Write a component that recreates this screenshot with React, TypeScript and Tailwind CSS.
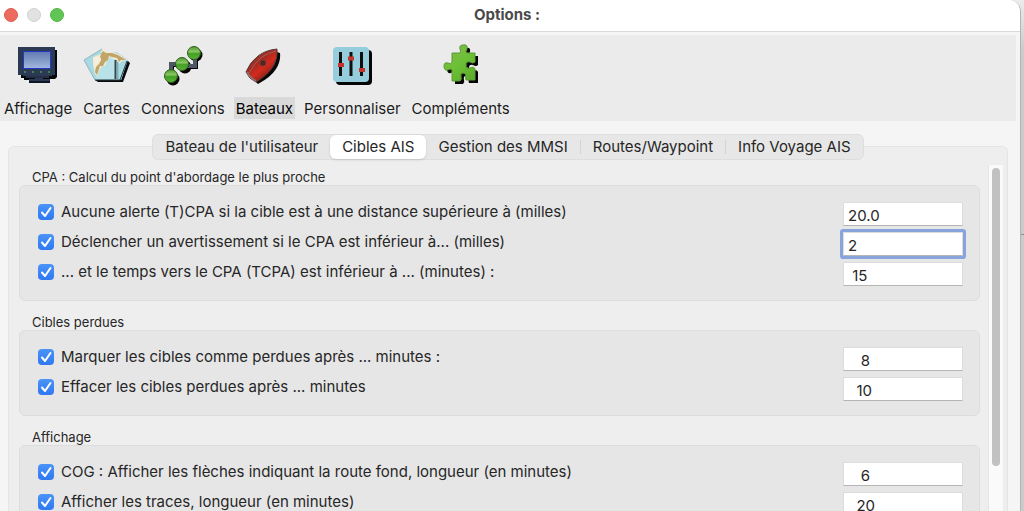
import React, { useState } from 'react';

const DisplayIcon = () => (
    <svg width="48" height="44" viewBox="0 0 48 44" aria-hidden="true">
        <path d="M7 6H43V33L41 35H36V39H15V36H10V34H7Z" fill="#05070b" />
        <path d="M4 3H41V31H38V32H35V34H29V35H36V37H15V35H21V34H12V32H9V31H4Z" fill="#2b3a52" />
        <path d="M15 37H36V39H15Z" fill="#101826" />
        <path d="M12 33H35" stroke="#1a2537" />
        <rect x="9.5" y="7.5" width="27" height="17" fill="url(#screen)" stroke="#2338c4" />
        <path d="M10 28h2M18 28h2M26 28h2M34 28h2" stroke="#3fa04c" strokeWidth="1.500" />
        <defs>
            <linearGradient id="screen" x1="0" y1="0" x2="0" y2="1">
                <stop offset="0" stopColor="#6079b0" />
                <stop offset="1" stopColor="#a3b8df" />
            </linearGradient>
        </defs>
    </svg>
);

const ChartIcon = () => (
    <svg width="48" height="44" viewBox="0 0 48 44" aria-hidden="true">
        <path d="M15 38H40L47 19L44 16L38 36L12 36Z" fill="#080b0d" />
        <path d="M1 16L19 5L25 9L34 8L45 16L38 36H12Z" fill="#a9d9e2" />
        <path d="M1 16L19 5M1 16L12 36" fill="none" stroke="#8fb6be" />
        <path d="M11 13L32 12V35H13Z" fill="#b9e2e8" />
        <path d="M10 13L18 10L19 5L21 4L24 8L29 8L36 10L41 14L45 16L39 17L36 20L34 16L30 15L27 13L24 17L22 22L19 22L16 27L14 32L12 30L10 21Z" fill="#f1ead4" />
        <path d="M18 10L20 7L23 9L29 9L35 11L40 14L43 16L38 16L36 18L34 14L29 13L26 12L25 16L22 18L20 22L17 22L14 31L12 28L13 23L16 20L18 16L17 13Z" fill="#c2a668" />
        <path d="M11 14L17 13L18 16L14 20L12 24Z" fill="#f5efdd" />
        <path d="M32.500 16V35" stroke="#36474b" strokeWidth="2" />
        <path d="M34.500 18V35" stroke="#7eaeb7" strokeWidth="2" />
        <path d="M44 17L37 36H12" fill="none" stroke="#27373b" />
    </svg>
);

const ConnectionIcon = () => (
    <svg width="48" height="44" viewBox="0 0 48 44" aria-hidden="true">
        <g fill="#050505">
            <circle cx="14" cy="35" r="6.500" />
            <circle cx="26" cy="23" r="6.500" />
            <circle cx="37" cy="11" r="6.500" />
        </g>
        <path d="M14 31V22H24M25 24H38V13" fill="none" stroke="#050505" strokeWidth="2" />
        <path d="M12 31V20H23M24 22H36V10" fill="none" stroke="#4d5664" strokeWidth="4" />
        <g fill="url(#node)" stroke="#2f5e1e">
            <circle cx="12" cy="32" r="6.500" />
            <circle cx="23" cy="20" r="6.500" />
            <circle cx="35" cy="9" r="6.500" />
        </g>
        <defs>
            <linearGradient id="node" x1="0" y1="0" x2="0" y2="1">
                <stop offset="0" stopColor="#4d9a2c" />
                <stop offset="0.4" stopColor="#8ac666" />
                <stop offset="0.55" stopColor="#43a023" />
                <stop offset="1" stopColor="#5cb236" />
            </linearGradient>
        </defs>
    </svg>
);

const BoatIcon = () => (
    <svg width="48" height="44" viewBox="0 0 48 44" aria-hidden="true">
        <path d="M9 32L18 40Q31 33 36 25Q41 17 40 9L37 8Z" fill="#080808" />
        <path d="M6 28Q10 18 18 12Q26 6 37 5Q38 13 34 21Q28 31 16 38Q9 35 6 28Z" fill="url(#hull)" stroke="#5a3a37" />
        <path d="M9 29Q14 19 22 13Q28 9 36 7" fill="none" stroke="#9a625b" />
        <path d="M7 28Q10 34 16 37" fill="none" stroke="#8a716d" strokeWidth="2" />
        <circle cx="23" cy="19" r="3" fill="#4e2624" stroke="#7a3530" />
        <defs>
            <linearGradient id="hull" x1="0.2" y1="0.1" x2="0.75" y2="0.8">
                <stop offset="0" stopColor="#82463f" />
                <stop offset="0.4" stopColor="#a62921" />
                <stop offset="0.65" stopColor="#d32b1d" />
                <stop offset="1" stopColor="#8a2019" />
            </linearGradient>
        </defs>
    </svg>
);

const SlidersIcon = () => (
    <svg width="48" height="44" viewBox="0 0 48 44" aria-hidden="true">
        <rect x="8" y="6" width="36" height="35" rx="4" fill="#050505" />
        <rect x="5" y="3" width="36" height="35" rx="4" fill="#96cddc" />
        <path d="M12.500 8V32M23 8V32M33.500 8V32" stroke="#101010" strokeWidth="3" />
        <path d="M10 21H16M20 14.500H26M31 26H37" stroke="#c3342d" strokeWidth="4" />
    </svg>
);

const PuzzleIcon = () => {
    const piece = 'M15 9H23Q24 8 23 5Q22 1 26 1Q31 0 30 5Q28 8 30 9H38V18Q36 20 33 18Q29 17 29 21Q29 25 33 24Q37 22 38 25V36H29Q28 34 29 32Q29 29 26 29Q23 29 24 33Q25 35 23 37H15V26Q13 24 11 26Q7 27 7 22Q7 18 11 19Q14 21 15 18Z';
    return (
        <svg width="48" height="44" viewBox="0 0 48 44" aria-hidden="true">
            <path d={piece} transform="translate(3 3)" fill="#050505" />
            <path d={piece} fill="url(#piece)" stroke="#5c9a34" />
            <defs>
                <linearGradient id="piece" x1="0" y1="0" x2="0.7" y2="1">
                    <stop offset="0" stopColor="#82b94d" />
                    <stop offset="0.6" stopColor="#6cc036" />
                    <stop offset="1" stopColor="#5faf2c" />
                </linearGradient>
            </defs>
        </svg>
    );
};

const sections = [
    { name: 'Affichage', icon: <DisplayIcon /> },
    { name: 'Cartes', icon: <ChartIcon /> },
    { name: 'Connexions', icon: <ConnectionIcon /> },
    { name: 'Bateaux', icon: <BoatIcon /> },
    { name: 'Personnaliser', icon: <SlidersIcon /> },
    { name: 'Compléments', icon: <PuzzleIcon /> },
];

const tabs = ["Bateau de l'utilisateur", 'Cibles AIS', 'Gestion des MMSI', 'Routes/Waypoint', 'Info Voyage AIS'];

const groups = [
    {
        title: "CPA : Calcul du point d'abordage le plus proche",
        rows: [
            { id: 'cpa-max', label: 'Aucune alerte (T)CPA si la cible est à une distance supérieure à (milles)', value: '20.0' },
            { id: 'cpa-warn', label: 'Déclencher un avertissement si le CPA est inférieur à... (milles)', value: '2' },
            { id: 'tcpa', label: '... et le temps vers le CPA (TCPA) est inférieur à ... (minutes) :', value: ' 15' },
        ],
    },
    {
        title: 'Cibles perdues',
        rows: [
            { id: 'mark-lost', label: 'Marquer les cibles comme perdues après ... minutes :', value: '   8' },
            { id: 'remove-lost', label: 'Effacer les cibles perdues après ... minutes', value: '  10' },
        ],
    },
    {
        title: 'Affichage',
        rows: [
            { id: 'cog', label: 'COG : Afficher les flèches indiquant la route fond, longueur (en minutes)', value: '   6' },
            { id: 'tracks', label: 'Afficher les traces, longueur (en minutes)', value: '  20' },
        ],
    },
];

const OptionRow: React.FC<{ id: string; label: string; value: string }> = ({ id, label, value }) => {
    const focused = id === 'cpa-warn';
    return (
        <div className="flex h-[30px] items-center justify-between">
            <label className="flex items-center gap-[7px] pb-1">
                <span className="grid size-4 shrink-0">
                    <input
                        type="checkbox"
                        defaultChecked
                        className="peer col-start-1 row-start-1 size-4 appearance-none rounded-[4px] bg-white checked:bg-linear-to-b checked:from-[#4a93f8] checked:to-[#2f78f1]"
                    />
                    <svg viewBox="0 0 16 16" className="pointer-events-none invisible col-start-1 row-start-1 size-4 peer-checked:visible" aria-hidden="true">
                        <path d="M4 8.500L7 12L12.500 4" fill="none" stroke="#ffffff" strokeWidth="2" strokeLinecap="round" strokeLinejoin="round" />
                    </svg>
                </span>
                {label}
            </label>
            <input
                type="text"
                id={id}
                aria-label={label}
                defaultValue={value}
                className={`h-6 w-[120px] border border-[#dcdcdc] border-b-[#b5b5b5] bg-white pt-[2px] pl-1 outline-none ${focused ? 'rounded-[1px] ring-3 ring-[#87a4dd]' : ''}`}
            />
        </div>
    );
};

const App: React.FC = () => {
    const [section, setSection] = useState('Bateaux');
    const [tab, setTab] = useState('Cibles AIS');

    return (
        <div className="flex h-screen overflow-hidden bg-linear-to-b from-[#ececec] to-[#cbcbcb] to-10% font-['Inter','Liberation_Sans',sans-serif] text-[15px] leading-5 text-[#262626]">
            <div className="flex min-w-0 flex-1 flex-col overflow-hidden rounded-tr-xl border-r border-[#b4b4b4] bg-[#f5f5f5]">
                {/* Title bar */}
                <header className="grid h-8 shrink-0 grid-cols-[1fr_auto_1fr] items-center border-b border-[#d9d9d9] bg-white pr-[10px] pb-[2px] pl-1">
                    <div className="flex gap-[9px]">
                        <button aria-label="Fermer" className="size-[14px] rounded-full border border-[#de5b51] bg-[#ed6a5f]" />
                        <button aria-label="Réduire" className="size-[14px] rounded-full border border-[#d0d0d0] bg-[#e2e2e2]" />
                        <button aria-label="Agrandir" className="size-[14px] rounded-full border border-[#54b548] bg-[#61c555]" />
                    </div>
                    <h1 className="font-bold text-[#4a4a4a]">Options :</h1>
                </header>

                {/* Toolbar */}
                <nav className="mt-[3px] mr-1 flex h-[86px] shrink-0 gap-[7px] bg-[#ebebeb] pt-[9px] pl-[2px]">
                    {sections.map((s) => (
                        <button key={s.name} onClick={() => setSection(s.name)} className="flex flex-col items-center gap-[9px]">
                            {s.icon}
                            <span className={`px-[2px] pt-[2px] ${section === s.name ? 'bg-[#d9d9d9] text-black' : 'text-[#1c1c1c]'}`}>{s.name}</span>
                        </button>
                    ))}
                </nav>

                <main className="flex min-h-0 flex-1 flex-col pt-[13px] pr-3 pl-2">
                    {/* Tabs sit across the top edge of the panel */}
                    <div role="tablist" className="relative z-10 -mb-[14px] flex h-[26px] shrink-0 self-center rounded-md border border-[#dedede] bg-[#e7e7e7]">
                        {tabs.map((t, i) => (
                            <React.Fragment key={t}>
                                {i > 2 && <span className="h-[14px] w-px self-center bg-[#d4d4d4]" />}
                                <button
                                    role="tab"
                                    aria-selected={tab === t}
                                    onClick={() => setTab(t)}
                                    className={`rounded-md px-3 ${tab === t ? 'bg-white shadow-sm' : ''}`}
                                >
                                    {t}
                                </button>
                            </React.Fragment>
                        ))}
                    </div>

                    <div className="flex min-h-0 flex-1 rounded-t-md border border-b-0 border-[#e4e4e4] bg-[#eeeeee] pt-[18px] pr-1 pl-[10px]">
                        <div className="min-w-0 flex-1">
                            {groups.map((g) => (
                                <fieldset key={g.title} className="mb-[9px]">
                                    <legend className="h-5 pt-1 pl-[13px] text-[13px] leading-4">{g.title}</legend>
                                    <div className="rounded-md border border-[#dddddd] bg-[#e6e6e6] pt-[13px] pr-4 pb-[11px] pl-[18px]">
                                        {g.rows.map((r) => (
                                            <OptionRow key={r.id} {...r} />
                                        ))}
                                    </div>
                                </fieldset>
                            ))}
                        </div>
                        <div className="ml-2 w-[15px] shrink-0 border-l border-[#e6e6e6] bg-[#fafafa] px-[3px] pt-[3px]">
                            <div className="h-[298px] rounded-full bg-[#c1c1c1]" />
                        </div>
                    </div>
                </main>
            </div>
            <div className="flex w-[3px] shrink-0 flex-col">
                <div className="h-[235px] border-b border-[#8f8f8f]" />
            </div>
        </div>
    );
};

export default App;
